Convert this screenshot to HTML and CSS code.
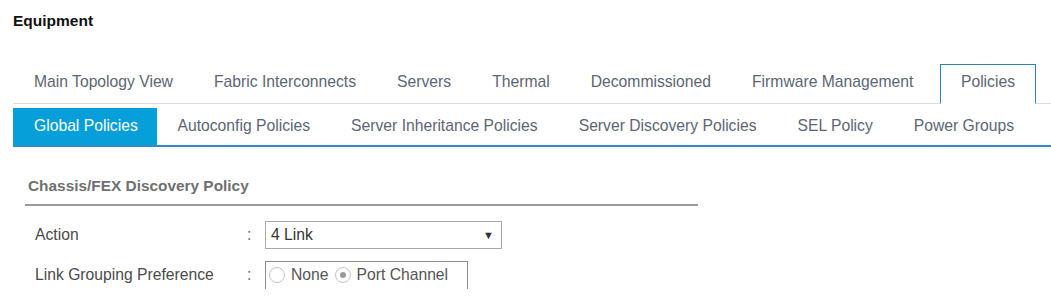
FILE: index.html
```html
<!DOCTYPE html>
<html lang="en">

<head>
    <meta charset="UTF-8">
    <title>Equipment</title>
    <link rel="stylesheet" href="styles.css">
</head>

<body>

    <div class="page">
        <h1 class="page-title">Equipment</h1>

        <!-- Top level tabs -->
        <ul class="tabs">
            <li>Main Topology View</li>
            <li>Fabric Interconnects</li>
            <li>Servers</li>
            <li>Thermal</li>
            <li>Decommissioned</li>
            <li>Firmware Management</li>
            <li class="active">Policies</li>
        </ul>

        <!-- Policies sub tabs -->
        <ul class="subtabs">
            <li class="active">Global Policies</li>
            <li>Autoconfig Policies</li>
            <li>Server Inheritance Policies</li>
            <li>Server Discovery Policies</li>
            <li>SEL Policy</li>
            <li>Power Groups</li>
        </ul>

        <div class="section">
            <h2 class="section-title">Chassis/FEX Discovery Policy</h2>

            <div class="form-row">
                <span class="form-label">Action</span>
                <span class="colon">:</span>
                <div class="select">
                    <span>4 Link</span>
                    <span class="arrow">&#9660;</span>
                </div>
            </div>

            <div class="form-row">
                <span class="form-label">Link Grouping Preference</span>
                <span class="colon">:</span>
                <div class="radio-group">
                    <label class="radio"><span class="dot"></span>None</label>
                    <label class="radio checked"><span class="dot"></span>Port Channel</label>
                </div>
            </div>
        </div>
    </div>

</body>

</html>
```

FILE: styles.css
```css
* {
    margin: 0;
    padding: 0;
    box-sizing: border-box;
}

body {
    font-family: 'Liberation Sans', Arial, sans-serif;
    background-color: #ffffff;
    color: #444;
}

.page {
    padding-left: 13px;
}

.page-title {
    font-size: 15.5px;
    font-weight: 700;
    line-height: 20px;
    color: #111;
    padding-top: 11px;
}

.tabs {
    list-style: none;
    display: flex;
    margin-top: 33px;
    border-bottom: 1px solid #dcdcdc;
    font-size: 15.7px;
}

.tabs li {
    height: 39px;
    line-height: 33px;
    padding: 0 19px 0 20px;
    color: #5c6673;
    margin-bottom: -1px;
    border: 1px solid transparent;
    border-bottom: none;
}

.tabs li.active {
    margin-left: auto;
    margin-right: 15px;
    padding: 0 20px;
    border-color: #2f80b3;
    background-color: #fff;
    border-bottom: 1px solid #fff;
    height: 40px;
}

.subtabs {
    list-style: none;
    display: flex;
    margin-top: 4px;
    border-bottom: 2px solid #2f8cc4;
    font-size: 15.7px;
}

.subtabs li {
    height: 37px;
    line-height: 36px;
    padding: 0 20.5px;
    color: #5c6673;
}

.subtabs li.active {
    background-color: #069fda;
    color: #fff;
    padding: 0 0 0 21px;
    width: 144px;
}

.section {
    margin-left: 12px;
    width: 673px;
}

.section-title {
    font-size: 15.4px;
    font-weight: 700;
    line-height: 20px;
    color: #6f7072;
    margin-top: 29px;
    padding-left: 3px;
    padding-bottom: 8px;
    border-bottom: 2px solid #9a9a9a;
}

.form-row {
    display: flex;
    align-items: center;
    height: 28px;
    margin-top: 12px;
    font-size: 15.7px;
}

.form-row:first-of-type {
    margin-top: 15px;
}

.form-label {
    width: 222px;
    padding-left: 10px;
    color: #4a4a4a;
}

.colon {
    width: 18px;
    color: #666;
}

.select {
    width: 237px;
    height: 28px;
    border: 1px solid #a8a8a8;
    display: flex;
    align-items: center;
    justify-content: space-between;
    padding: 0 7px 0 5px;
    color: #333;
}

.select .arrow {
    font-size: 11px;
    color: #333;
}

.radio-group {
    width: 203px;
    height: 29px;
    border: 1px solid #8f8f8f;
    display: flex;
    align-items: center;
    gap: 6px;
    padding-left: 3px;
}

.radio {
    display: flex;
    align-items: center;
    gap: 6px;
    color: #555;
}

.dot {
    width: 16px;
    height: 16px;
    border: 1px solid #c4c4c4;
    border-radius: 50%;
    display: flex;
    align-items: center;
    justify-content: center;
}

.radio.checked .dot::after {
    content: '';
    width: 6px;
    height: 6px;
    border-radius: 50%;
    background-color: #9a9a9a;
}
```
